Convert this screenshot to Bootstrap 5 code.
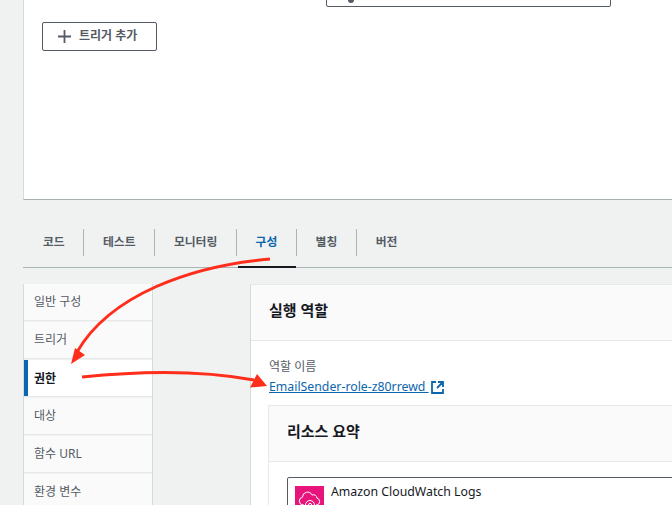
<!DOCTYPE html>
<html lang="ko">
<head>
<meta charset="utf-8">
<title>Lambda 구성</title>
<link href="https://cdn.jsdelivr.net/npm/bootstrap@5.3.0/dist/css/bootstrap.min.css" rel="stylesheet">
<style>
html, body { margin: 0; height: 505px; overflow: hidden; }
body { background: #f0f2f2; font-family: "Noto Sans", "Noto Sans CJK KR", sans-serif; font-size: 12px; color: #16191f; position: relative; width: 672px; }
.shell { padding-left: 23px; }
.top-panel { height: 200px; background: #fff; border-left: 1px solid #d5dbdb; border-bottom: 1px solid #a9b0b0; position: relative; padding: 22px 0 0 18px; }
.top-box { position: absolute; left: 302px; top: -10px; width: 285px; height: 17px; border: 1px solid #545b64; border-radius: 2px; }
.box-glyph { position: absolute; left: 21px; bottom: 3px; width: 6px; height: 3px; background: #545b64; border-radius: 0 0 3px 3px; }
.add-btn { width: 115px; height: 29px; border: 1px solid #545b64; border-radius: 2px; color: #545b64; font-weight: 700; font-size: 12px; background: #fff; gap: 8px; padding: 0 0 0 15px; }
.add-label { position: relative; top: -1px; }
.tabs-row { height: 68px; border-bottom: 1px solid #a9b4b4; padding-top: 29px; }
.tab-item { position: relative; height: 39px; padding: 0 18.300px 0 20px; color: #545b64; font-weight: 700; font-size: 11.800px; line-height: 24px; }
.tab-item + .tab-item::before { content: ""; position: absolute; left: 0; top: 0; height: 27px; width: 1px; background: #a9b4b4; }
.tab-item.on { color: #0b66ad; }
.tab-item.on::after { content: ""; position: absolute; left: 2px; right: 0; bottom: 0; height: 2px; background: #16191f; }
.body-row { padding-top: 16px; }
.side-nav { width: 130px; flex: 0 0 130px; border-left: 1px solid #d5dbdb; border-right: 1px solid #d5dbdb; }
.side-item { height: 36px; margin-bottom: 2px; background: #fafafa; color: #545b64; padding: 9px 0 0 10px; line-height: 18px; box-shadow: 0 1px 0 #e6e9e9; }
.side-item.on { background: #fff; color: #16191f; font-weight: 700; border-left: 4px solid #0b66ad; padding: 10px 0 0 6px; }
.main-col { margin-left: 97px; width: 480px; flex: 0 0 480px; background: #fff; border-left: 1px solid #d5dbdb; border-top: 1px solid #e6e9e9; }
.panel-head { height: 56px; background: #fafafa; border-bottom: 1px solid #e6e9e9; padding: 14px 0 0 18px; font-size: 15px; font-weight: 700; line-height: 22px; }
.panel-body { padding: 17px 0 0 17px; }
.role-label { color: #545b64; line-height: 18px; margin-left: 1px; }
.role-link { color: #0b66ad; text-decoration: underline; line-height: 18px; display: inline-flex; align-items: center; gap: 0; margin-left: 1px; margin-top: 2px; font-size: 12.300px; white-space: pre; }
.inner-card { margin-top: 9px; border: 1px solid #e6e9e9; border-right: 0; background: #fff; }
.inner-head { height: 56px; background: #fafafa; border-bottom: 1px solid #e6e9e9; padding: 14px 0 0 18px; font-size: 15px; font-weight: 700; line-height: 22px; }
.inner-body { padding: 15px 0 0 18px; }
.svc-box { border: 1px solid #545b64; border-radius: 2px; height: 60px; padding: 8px 0 0 7px; gap: 7px; line-height: 11px; font-size: 12.300px; }
.svc-icon { width: 29px; height: 29px; background: #e7157b; flex: 0 0 29px; }
.link-glyph { margin-left: 2px; }
.overlay { position: absolute; left: 0; top: 0; pointer-events: none; }
</style>
</head>
<body>
<div class="shell">
  <div class="top-panel">
    <div class="top-box"><span class="box-glyph"></span></div>
    <button type="button" class="btn add-btn d-flex align-items-center justify-content-start">
      <svg width="13" height="13" viewBox="0 0 13 13"><path d="M6.500 0v13M0 6.500h13" stroke="#545b64" stroke-width="1.800" fill="none"/></svg>
      <span class="add-label">트리거 추가</span>
    </button>
  </div>
  <div class="tabs-row d-flex">
    <div class="tab-item">코드</div>
    <div class="tab-item">테스트</div>
    <div class="tab-item">모니터링</div>
    <div class="tab-item on">구성</div>
    <div class="tab-item">별칭</div>
    <div class="tab-item">버전</div>
  </div>
  <div class="body-row d-flex">
    <div class="side-nav">
      <div class="side-item">일반 구성</div>
      <div class="side-item">트리거</div>
      <div class="side-item on">권한</div>
      <div class="side-item">대상</div>
      <div class="side-item">함수 URL</div>
      <div class="side-item">환경 변수</div>
    </div>
    <div class="main-col">
      <div class="panel-head">실행 역할</div>
      <div class="panel-body">
        <div class="role-label">역할 이름</div>
        <a class="role-link" href="#"><span>EmailSender-role-z80rrewd&nbsp;</span><svg class="link-glyph" width="13" height="13" viewBox="0 0 13 13" fill="none" stroke="#0b66ad" stroke-width="1.800"><path d="M5 1H1v11h11V8M7 1h5v5M12 1L6 7"/></svg></a>
        <div class="inner-card">
          <div class="inner-head">리소스 요약</div>
          <div class="inner-body">
            <div class="svc-box d-flex">
              <div class="svc-icon d-flex justify-content-center align-items-center">
                <svg width="23" height="21" viewBox="0 0 23 21" fill="none" stroke="#fff" stroke-width="1"><path d="M6 15H5a4 4 0 0 1-.5-7.900A5 5 0 0 1 14 5a3.600 3.600 0 0 1 5 3.200A3.500 3.500 0 0 1 19 15h-1"/><circle cx="12" cy="15" r="4.500"/><circle cx="12" cy="15" r="1.600"/></svg>
              </div>
              <div>Amazon CloudWatch Logs</div>
            </div>
          </div>
        </div>
      </div>
    </div>
  </div>
</div>
<svg class="overlay" width="672" height="505" viewBox="0 0 672 505" fill="none">
  <path d="M270 259C190 266 110 295 77 352" stroke="#ff2d1c" stroke-width="3"/>
  <path d="M71 364L75 348L85 355Z" fill="#ff2d1c"/>
  <path d="M82 377C140 371 200 370 254 380" stroke="#ff2d1c" stroke-width="3"/>
  <path d="M267 386L250 387.500L257 374Z" fill="#ff2d1c"/>
</svg>
</body>
</html>
